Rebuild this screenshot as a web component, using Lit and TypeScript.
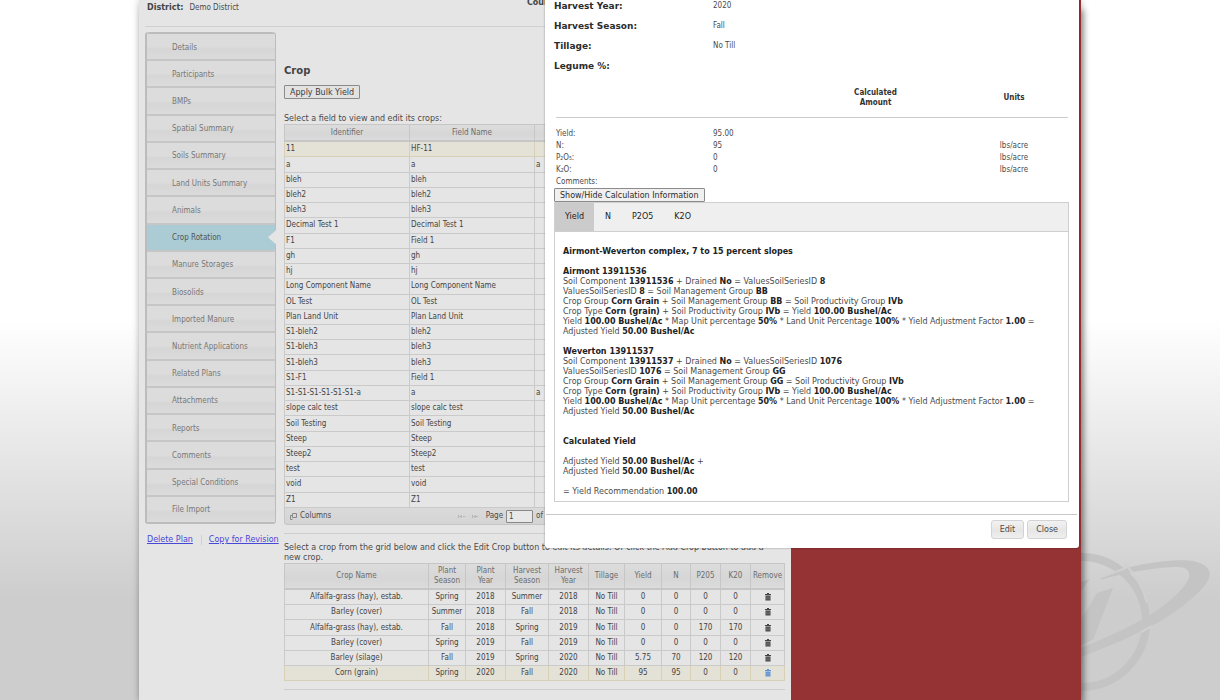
import { LitElement, html, css, svg } from "lit";
import { customElement, property, state } from "lit/decorators.js";
import { classMap } from "lit/directives/class-map.js";

const MENU = [
  "Details", "Participants", "BMPs", "Spatial Summary", "Soils Summary", "Land Units Summary",
  "Animals", "Crop Rotation", "Manure Storages", "Biosolids", "Imported Manure",
  "Nutrient Applications", "Related Plans", "Attachments", "Reports", "Comments",
  "Special Conditions", "File Import",
];

const FIELDS: [string, string, string][] = [
  ["11", "HF-11", ""], ["a", "a", "a"], ["bleh", "bleh", ""], ["bleh2", "bleh2", ""],
  ["bleh3", "bleh3", ""], ["Decimal Test 1", "Decimal Test 1", ""], ["F1", "Field 1", ""],
  ["gh", "gh", ""], ["hj", "hj", ""], ["Long Component Name", "Long Component Name", ""],
  ["OL Test", "OL Test", ""], ["Plan Land Unit", "Plan Land Unit", ""], ["S1-bleh2", "bleh2", ""],
  ["S1-bleh3", "bleh3", ""], ["S1-bleh3", "bleh3", ""], ["S1-F1", "Field 1", ""],
  ["S1-S1-S1-S1-S1-S1-a", "a", "a"], ["slope calc test", "slope calc test", ""],
  ["Soil Testing", "Soil Testing", ""], ["Steep", "Steep", ""], ["Steep2", "Steep2", ""],
  ["test", "test", ""], ["void", "void", ""], ["Z1", "Z1", ""],
];

const CROP_COLUMNS = [
  "Crop Name", "Plant\nSeason", "Plant\nYear", "Harvest\nSeason", "Harvest\nYear",
  "Tillage", "Yield", "N", "P205", "K20", "Remove",
];

const CROPS = [
  ["Alfalfa-grass (hay), estab.", "Spring", "2018", "Summer", "2018", "No Till", "0", "0", "0", "0"],
  ["Barley (cover)", "Summer", "2018", "Fall", "2018", "No Till", "0", "0", "0", "0"],
  ["Alfalfa-grass (hay), estab.", "Fall", "2018", "Spring", "2019", "No Till", "0", "0", "170", "170"],
  ["Barley (cover)", "Spring", "2019", "Fall", "2019", "No Till", "0", "0", "0", "0"],
  ["Barley (silage)", "Fall", "2019", "Spring", "2020", "No Till", "5.75", "70", "120", "120"],
  ["Corn (grain)", "Spring", "2020", "Fall", "2020", "No Till", "95", "95", "0", "0"],
];

const SOILS = [
  { name: "Airmont", component: "13911536", series: "8", group: "BB" },
  { name: "Weverton", component: "13911537", series: "1076", group: "GG" },
];

@customElement("side-menu")
class SideMenu extends LitElement {
  @property() active = "";

  static styles = css`
    :host { display: block; }
    .list {
      display: grid;
      grid-auto-rows: 1fr;
      min-height: 492px;
      box-sizing: border-box;
      margin: 0;
      padding: 0;
      list-style: none;
      border: solid #bcbcbc;
      border-width: 0 1px 2px 2px;
      border-radius: 3px;
    }
    .item { display: grid; border-top: 2px solid #c6c6c6; position: relative; }
    .item:first-child { border-top-color: #bcbcbc; border-radius: 3px 3px 0 0; }
    .link {
      display: flex;
      align-items: center;
      padding: 2px 0 0 25px;
      color: #777;
      text-decoration: none;
      background: linear-gradient(#dcdcdc 0 50%, #d6d6d6 60%, #dbdbdb);
    }
    .item.active .link { background: #abccd4; color: #4f5558; }
    .item.active::after {
      content: "";
      position: absolute;
      right: -1px;
      top: 50%;
      width: 8px;
      height: 14px;
      margin-top: -7px;
      background: #e5e5e5;
      clip-path: polygon(100% 0, 0 50%, 100% 100%);
    }
  `;

  render() {
    return html`<ul class="list">
      ${MENU.map((m) => html`<li class=${classMap({ item: true, active: m === this.active })}>
        <a class="link" href="#">${m}</a>
      </li>`)}
    </ul>`;
  }
}

const trash = svg`<path d="M0 1h2V0h2v1h2v1H0zM0.5 2.6h5V7.5h-5z"/><path d="M2 3.4v3.3M4 3.4v3.3" stroke="#bbb" stroke-width=".5"/>`;

@customElement("app-root")
class AppRoot extends LitElement {
  @state() private tab = "Yield";

  static styles = css`
    :host {
      display: block;
      position: relative;
      min-height: 100vh;
      max-height: 100vh;
      overflow: hidden;
      font-family: "DejaVu Sans", sans-serif;
      font-size: 8px;
      line-height: 10px;
      color: #4a4a4a;
      background: linear-gradient(#fff 320px, #e0e0e0 490px, #cdcdcd 600px);
    }
    a { color: #4747d8; }
    button, input { font: inherit; color: inherit; }
    .condensed, table { font-family: "DejaVu Sans Condensed", "DejaVu Sans", sans-serif; font-stretch: condensed; }
    .logo { position: absolute; right: 0; bottom: 0; width: 139px; height: 160px; }

    .page {
      position: relative;
      display: grid;
      grid-template-columns: 1fr 290px;
      min-height: 100vh;
      margin: 0 139px;
      background: #943234;
      box-shadow: 3px 10px 6px rgba(0, 0, 0, 0.35), 0 0 7px rgba(0, 0, 0, 0.25);
    }
    .content { background: #e5e5e5; padding: 0 6px; }
    .summary { display: flex; height: 27px; box-sizing: border-box; padding: 3px 2px 0; border-bottom: 1px solid #d0d0d0; }
    .summary b { margin-right: 6px; color: #444; }
    .summary .county { margin: -5px 0 0 auto; padding-right: 221px; }
    .columns { display: grid; grid-template-columns: 131px 1fr; gap: 8px; padding-top: 5px; }
    .links { display: flex; gap: 8px; margin-top: 11px; padding-left: 2px; white-space: nowrap; }
    .links a + a { border-left: 1px solid #d0d0d0; padding-left: 7px; }

    h2 { margin: 33px 0 8px; font-size: 10px; line-height: 12px; color: #444; }
    .plain {
      display: block;
      height: 14px;
      padding: 0 5px;
      line-height: 11px;
      border: 1px solid #8b8b8b;
      border-radius: 1px;
      background: #e2e2e2;
      color: #3c3c3c;
      white-space: nowrap;
    }
    .hint { margin: 0; }
    .plain + .hint { margin-top: 15px; }

    .grid { width: 100%; border-collapse: collapse; table-layout: fixed; border: 1px solid #c4c4c4; }
    .grid th {
      font-weight: 400;
      color: #6c6c6c;
      padding: 0;
      white-space: pre-line;
      border: 1px solid #c6c6c6;
      border-bottom: 2px solid #c6c6c6;
      background: linear-gradient(#dcdcdc, #d6d6d6 60%, #dcdcdc);
    }
    .grid td { padding: 0 1px; border: 1px solid #cacaca; white-space: nowrap; color: #444; }
    .grid tr.selected td { background: #e4e1d6; border-color: #d8d0b4; }
    .fields { height: 384px; }
    .fields th { height: 15px; }
    .pager {
      display: flex;
      align-items: center;
      height: 17px;
      box-sizing: border-box;
      padding-left: 5px;
      border: 1px solid #c6c6c6;
      border-top: 0;
      border-radius: 0 0 3px 3px;
      background: linear-gradient(#dadada, #d4d4d4);
    }
    .pager svg { width: 7px; height: 7px; margin-right: 3px; }
    .pager .nav { width: 20px; margin-left: auto; margin-right: 8px; }
    .pager label { display: flex; align-items: center; gap: 3px; padding-right: 241px; }
    .pager input { width: 27px; height: 13px; box-sizing: border-box; padding: 0 2px; border: 1px solid #888; background: #e8e8e8; border-radius: 1px; }
    .rule { height: 1px; margin: 8px 0 9px; border: 0; background: #cdcdcd; }
    .crops { height: 118px; text-align: center; }
    .crops th { height: 24px; }
    .icon { display: block; margin: 0 auto; padding: 0; border: 0; background: none; width: 6px; height: 8px; color: #444; }
    .selected .icon { color: #5d93d8; }
    .icon svg { display: block; width: 6px; height: 8px; fill: currentColor; }

    .dialog {
      position: absolute;
      top: -4px;
      right: 2px;
      width: 534px;
      box-sizing: border-box;
      padding: 0 10px 9px 9px;
      background: #fff;
      border-radius: 0 0 3px 3px;
      box-shadow: 0 0 2px rgba(0, 0, 0, 0.45);
    }
    dl { display: grid; grid-template-columns: 159px 1fr; margin: 0; line-height: 20px; }
    dt { font-weight: 700; font-size: 9px; color: #2c2c2c; }
    dd { margin: 0; }
    .results { width: 512px; margin: 0 0 0 2px; border-collapse: collapse; table-layout: fixed; line-height: 12px; text-align: left; }
    .results td, .results th { padding: 0; }
    .results thead th { height: 39px; padding-top: 2px; line-height: 10px; text-align: center; color: #333; border-bottom: 1px solid #ccc; }
    .results tbody th { font-weight: 400; }
    .results .unit { text-align: center; }
    .results .space td { height: 10px; }
    .dialog .plain { background: #f0f0f0; color: #2c2c2c; }
    .tabs { border: 1px solid #cfcfcf; }
    .tablist { display: flex; gap: 1px; height: 28px; background: #efefef; border-bottom: 1px solid #cfcfcf; }
    .tab { padding: 0 10px; border: 0; background: none; color: #222; }
    .tab.current { background: #cbcbcb; }
    .panel { padding: 15px 8px 4px; }
    .panel p { margin: 0 0 10px; }
    .panel b { color: #222; }
    .panel .total { margin-top: 20px; }
    .actions { display: flex; justify-content: flex-end; gap: 3px; margin: 12px -8px 0; padding: 5px 10px 0; border-top: 1px solid #c8c8c8; }
    .action { height: 19px; padding: 0 8px; border: 1px solid #d3d3d3; border-radius: 3px; background: linear-gradient(#f2f2f2, #e6e6e6 55%, #efefef); }
  `;

  private soil(s: (typeof SOILS)[number]) {
    return html`<p>
      <b>${s.name} ${s.component}</b><br />
      Soil Component <b>${s.component}</b> + Drained <b>No</b> = ValuesSoilSeriesID <b>${s.series}</b><br />
      ValuesSoilSeriesID <b>${s.series}</b> = Soil Management Group <b>${s.group}</b><br />
      Crop Group <b>Corn Grain</b> + Soil Management Group <b>${s.group}</b> = Soil Productivity Group <b>IVb</b><br />
      Crop Type <b>Corn (grain)</b> + Soil Productivity Group <b>IVb</b> = Yield <b>100.00 Bushel/Ac</b><br />
      Yield <b>100.00 Bushel/Ac</b> * Map Unit percentage <b>50%</b> * Land Unit Percentage <b>100%</b> * Yield
      Adjustment Factor <b>1.00</b> =<br />
      Adjusted Yield <b>50.00 Bushel/Ac</b>
    </p>`;
  }

  private dialog() {
    const tabs = ["Yield", "N", "P2O5", "K2O"];
    return html`<section class="dialog" role="dialog" aria-label="Crop">
      <dl>
        <dt>Harvest Year:</dt><dd class="condensed">2020</dd>
        <dt>Harvest Season:</dt><dd class="condensed">Fall</dd>
        <dt>Tillage:</dt><dd class="condensed">No Till</dd>
        <dt>Legume %:</dt><dd class="condensed"></dd>
      </dl>
      <table class="results">
        <colgroup><col style="width:157px" /><col style="width:78px" /><col style="width:169px" /><col style="width:108px" /></colgroup>
        <thead><tr><th></th><th></th><th>Calculated<br />Amount</th><th>Units</th></tr></thead>
        <tbody>
          <tr class="space"><td colspan="4"></td></tr>
          <tr><th>Yield:</th><td>95.00</td><td></td><td class="unit"></td></tr>
          <tr><th>N:</th><td>95</td><td></td><td class="unit">lbs/acre</td></tr>
          <tr><th>P₂O₅:</th><td>0</td><td></td><td class="unit">lbs/acre</td></tr>
          <tr><th>K₂O:</th><td>0</td><td></td><td class="unit">lbs/acre</td></tr>
          <tr><th>Comments:</th><td></td><td></td><td class="unit"></td></tr>
        </tbody>
      </table>
      <button class="plain">Show/Hide Calculation Information</button>
      <div class="tabs">
        <div class="tablist" role="tablist">
          ${tabs.map((t) => html`<button role="tab" class=${classMap({ tab: true, current: t === this.tab })}
            @click=${() => (this.tab = t)}>${t}</button>`)}
        </div>
        <div class="panel" role="tabpanel">
          <p><b>Airmont-Weverton complex, 7 to 15 percent slopes</b></p>
          ${SOILS.map((s) => this.soil(s))}
          <p class="total"><b>Calculated Yield</b></p>
          <p>Adjusted Yield <b>50.00 Bushel/Ac</b> +<br />Adjusted Yield <b>50.00 Bushel/Ac</b></p>
          <div>= Yield Recommendation <b>100.00</b></div>
        </div>
      </div>
      <div class="actions">
        <button class="action">Edit</button><button class="action">Close</button>
      </div>
    </section>`;
  }

  render() {
    const widths = [144, 37, 40, 43, 40, 36, 37, 29, 30, 30, 34];
    return html`
      <svg class="logo" viewBox="0 0 139 160" fill="#c4c4c4" aria-hidden="true">
        <circle cx="0" cy="82" r="65" fill="none" stroke="#c4c4c4" stroke-width="8" />
        <path d="M49 27C75 21 100 19 112 21C126 24 131 31 128 38C126 46 108 63 86 77C72 86 40 102 0 117V108C24 98 50 87 72 73C88 63 104 48 108 38C110 30 104 27 96 27C80 27 50 31 19 40L22 36Z" />
        <path d="M0 42 9 39 0 51ZM16 53 32 48 12 100 0 105V80Z" />
        <path fill="none" stroke="#d0d0d0" stroke-width="2" d="M44 24Q60 40 66 63M18 38 45 28M71 86 60 92" />
      </svg>
      <div class="page">
        <main class="content">
          <div class="summary"><b>District:</b><span class="condensed">Demo District</span><b class="county">County:</b></div>
          <div class="columns">
            <nav>
              <side-menu class="condensed" active="Crop Rotation"></side-menu>
              <div class="links"><a href="#">Delete Plan</a><a href="#">Copy for Revision</a></div>
            </nav>
            <div>
              <h2>Crop</h2>
              <button class="plain">Apply Bulk Yield</button>
              <p class="hint">Select a field to view and edit its crops:</p>
              <table class="grid fields">
                <thead><tr><th>Identifier</th><th>Field Name</th><th></th><th></th></tr></thead>
                <tbody>
                  ${FIELDS.map((f, i) => html`<tr class=${classMap({ selected: i === 0 })}>
                    <td>${f[0]}</td><td>${f[1]}</td><td>${f[2]}</td><td></td></tr>`)}
                </tbody>
              </table>
              <div class="pager condensed">
                <svg viewBox="0 0 7 7" fill="none" stroke="#888"><path d="M2.5.5h4v4h-4zM2.500 2.500h-2v4h2" /></svg>Columns
                <svg class="nav" viewBox="0 0 20 7" fill="#b5b5b5"><path d="M0 2h1v3H0zM4 2v3L1 3.500zM5 3h2v1H5zM14 2h1v3h-1zM18 2v3l-3-1.500zM18 3h2v1h-2z" /></svg>
                <label>Page <input value="1" /> of</label>
              </div>
              <hr class="rule" />
              <p class="hint">Select a crop from the grid below and click the Edit Crop button to edit its details. Or click the Add Crop button to add a<br />new crop.</p>
              <table class="grid crops">
                <colgroup>${widths.map((w) => html`<col style="width:${w}px" />`)}</colgroup>
                <thead><tr>${CROP_COLUMNS.map((c) => html`<th>${c}</th>`)}</tr></thead>
                <tbody>
                  ${CROPS.map((r, i) => html`<tr class=${classMap({ selected: i === 5 })}>
                    ${r.map((c) => html`<td>${c}</td>`)}
                    <td><button class="icon" aria-label="Remove"><svg viewBox="0 0 6 8">${trash}</svg></button></td>
                  </tr>`)}
                </tbody>
              </table>
              <hr class="rule" />
            </div>
          </div>
        </main>
        ${this.dialog()}
      </div>`;
  }
}
